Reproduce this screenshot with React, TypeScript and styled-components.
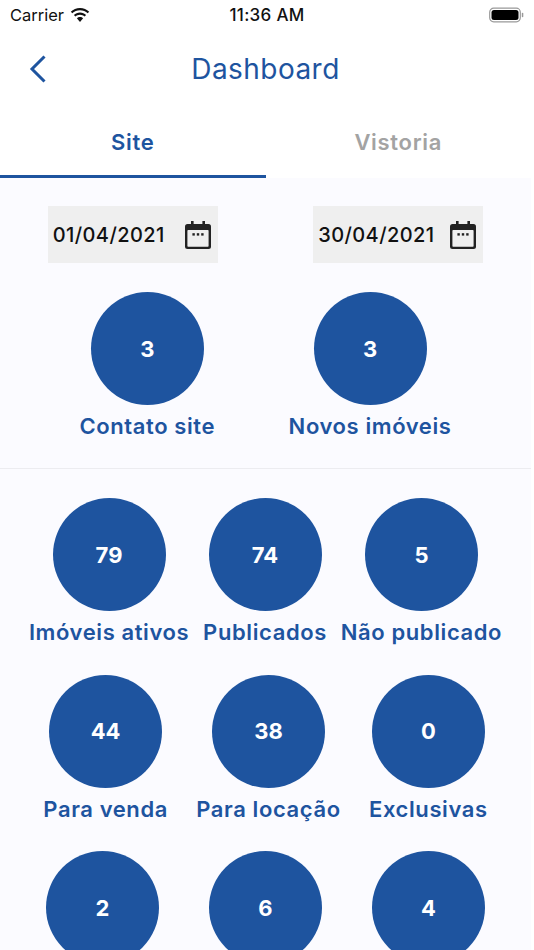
import React from 'react';
import styled, { createGlobalStyle } from 'styled-components';

const GlobalStyle = createGlobalStyle`
  html, body {
    margin: 0;
    padding: 0;
    background: #ffffff;
  }
  body {
    font-family: Inter, "Liberation Sans", sans-serif;
    overflow: hidden;
  }
`;

const BLUE = '#1e549f';

const CalendarIcon = () => (
  <svg width="28" height="30" viewBox="0 0 28 30" fill="none">
    <rect x="7" y="1" width="2.6" height="5" fill="#222" />
    <rect x="18.4" y="1" width="2.6" height="5" fill="#222" />
    <rect x="1" y="4" width="26" height="25" rx="2.5" fill="#222" />
    <rect x="3.400" y="10" width="21.200" height="16.800" rx="0.800" fill="#efefef" />
    <rect x="8.400" y="13.200" width="2.400" height="2.400" fill="#222" />
    <rect x="12.800" y="13.200" width="2.400" height="2.400" fill="#222" />
    <rect x="17.200" y="13.200" width="2.400" height="2.400" fill="#222" />
  </svg>
);

const WifiIcon = () => (
  <svg width="22" height="16" viewBox="0 0 22 16">
    <path d="M11 3.200c3 0 5.700 1.200 7.700 3.100l1.500-1.600C17.800 2.400 14.600 1 11 1S4.200 2.400 1.800 4.700l1.500 1.600C5.300 4.400 8 3.200 11 3.200z" fill="#111" />
    <path d="M11 7.700c1.800 0 3.400.7 4.600 1.800l1.500-1.600C15.500 6.400 13.400 5.500 11 5.500s-4.500.9-6.100 2.400l1.500 1.600c1.200-1.100 2.800-1.800 4.600-1.800z" fill="#111" />
    <path d="M11 10c-1.200 0-2.300.5-3.100 1.200L11 15l3.100-3.800C13.300 10.500 12.200 10 11 10z" fill="#111" />
  </svg>
);

const BackIcon = () => (
  <svg width="18" height="30" viewBox="0 0 18 30" fill="none">
    <path d="M15.500 2.500 3 15l12.500 12.500" stroke={BLUE} strokeWidth="3" />
  </svg>
);

const BatteryIcon = () => (
  <svg width="35" height="16" viewBox="0 0 35 16" fill="none">
    <rect x="0.700" y="1.200" width="30.600" height="13.600" rx="4" stroke="#999" strokeWidth="1.200" />
    <rect x="2.500" y="3" width="27" height="10" rx="2.500" fill="#000" />
    <rect x="32.800" y="5.800" width="1.500" height="4.400" rx="0.700" fill="#999" />
  </svg>
);

type StatData = { value: number; label?: string };

const topStats: StatData[] = [
  { value: 3, label: 'Contato site' },
  { value: 3, label: 'Novos imóveis' },
];

const rows: StatData[][] = [
  [
    { value: 79, label: 'Imóveis ativos' },
    { value: 74, label: 'Publicados' },
    { value: 5, label: 'Não publicado' },
  ],
  [
    { value: 44, label: 'Para venda' },
    { value: 38, label: 'Para locação' },
    { value: 0, label: 'Exclusivas' },
  ],
  [{ value: 2 }, { value: 6 }, { value: 4 }],
];

const App = () => {
  return (
    <Page>
      <GlobalStyle />
      <StatusBar>
        <Carrier>
          Carrier <WifiIcon />
        </Carrier>
        <Clock>11:36 AM</Clock>
        <Battery>
          <BatteryIcon />
        </Battery>
      </StatusBar>
      <Header>
        <BackButton>
          <BackIcon />
        </BackButton>
        <Title>Dashboard</Title>
      </Header>
      <Tabs>
        <Tab $active>Site</Tab>
        <Tab>Vistoria</Tab>
      </Tabs>
      <Content>
        <DateRow>
          <DateBox>
            <DateText>01/04/2021</DateText>
            <CalendarIcon />
          </DateBox>
          <DateBox>
            <DateText>30/04/2021</DateText>
            <CalendarIcon />
          </DateBox>
        </DateRow>
        <TopRow>
          {topStats.map((s) => (
            <Stat key={s.label}>
              <Circle>{s.value}</Circle>
              <StatLabel>{s.label}</StatLabel>
            </Stat>
          ))}
        </TopRow>
        <Divider />
        {rows.map((row, i) => (
          <StatRow key={i}>
            {row.map((s) => (
              <Stat key={s.value} $minWidth={s.label ? undefined : 151}>
                <Circle>{s.value}</Circle>
                {s.label && <StatLabel>{s.label}</StatLabel>}
              </Stat>
            ))}
          </StatRow>
        ))}
      </Content>
    </Page>
  );
};

export default App;

const Page = styled.div`
  width: 531px;
  height: 950px;
  overflow: hidden;
  background: #ffffff;
`;

const StatusBar = styled.div`
  height: 30px;
  display: grid;
  grid-template-columns: 1fr auto 1fr;
  align-items: center;
  padding: 0 7px 0 10px;
  font-size: 16.5px;
  color: #111;
`;

const Carrier = styled.div`
  display: flex;
  align-items: center;
  gap: 5px;
`;

const Clock = styled.div`
  font-size: 17px;
  font-weight: 500;
  letter-spacing: 0.3px;
`;

const Battery = styled.div`
  display: flex;
  justify-content: flex-end;
`;

const Header = styled.div`
  height: 78px;
  display: flex;
  align-items: center;
  justify-content: center;
  position: relative;
`;

const BackButton = styled.div`
  position: absolute;
  left: 29px;
  top: 24px;
  display: flex;
`;

const Title = styled.h1`
  margin: 0;
  font-size: 28px;
  font-weight: 400;
  letter-spacing: 0.45px;
  color: ${BLUE};
`;

const Tabs = styled.div`
  display: flex;
  height: 70px;
`;

const Tab = styled.div<{ $active?: boolean }>`
  flex: 1;
  display: flex;
  align-items: center;
  justify-content: center;
  box-sizing: border-box;
  font-size: 22px;
  font-weight: 600;
  letter-spacing: 0.7px;
  color: ${(p) => (p.$active ? BLUE : '#a3a3a3')};
  border-bottom: 3px solid ${(p) => (p.$active ? BLUE : 'transparent')};
`;

const Content = styled.div`
  background: #fbfbff;
  padding-top: 28px;
  height: 772px;
`;

const DateRow = styled.div`
  display: flex;
  justify-content: space-around;
`;

const DateBox = styled.div`
  width: 170px;
  height: 57px;
  box-sizing: border-box;
  background: #efefef;
  padding: 0 6px 0 5px;
  display: flex;
  align-items: center;
  justify-content: space-between;
`;

const DateText = styled.span`
  font-size: 20px;
  font-weight: 500;
  letter-spacing: 0.4px;
  color: #111;
`;

const TopRow = styled.div`
  display: flex;
  justify-content: space-evenly;
  padding: 29px 6px 0;
`;

const Divider = styled.div`
  height: 1px;
  background: #ececf0;
  margin-top: 28px;
`;

const StatRow = styled.div`
  display: flex;
  justify-content: space-evenly;
  padding: 29px 15px 0;

  & + & {
    padding-top: 28.5px;
  }
`;

const Stat = styled.div<{ $minWidth?: number }>`
  display: flex;
  flex-direction: column;
  align-items: center;
  min-width: ${(p) => (p.$minWidth ? `${p.$minWidth}px` : '0')};
`;

const Circle = styled.div`
  width: 113px;
  height: 113px;
  border-radius: 50%;
  background: ${BLUE};
  color: #ffffff;
  display: flex;
  align-items: center;
  justify-content: center;
  font-size: 22px;
  font-weight: 700;
  flex-shrink: 0;
`;

const StatLabel = styled.div`
  margin-top: 7px;
  font-size: 22px;
  line-height: 28px;
  font-weight: 600;
  letter-spacing: 0.6px;
  color: ${BLUE};
  white-space: nowrap;
`;
